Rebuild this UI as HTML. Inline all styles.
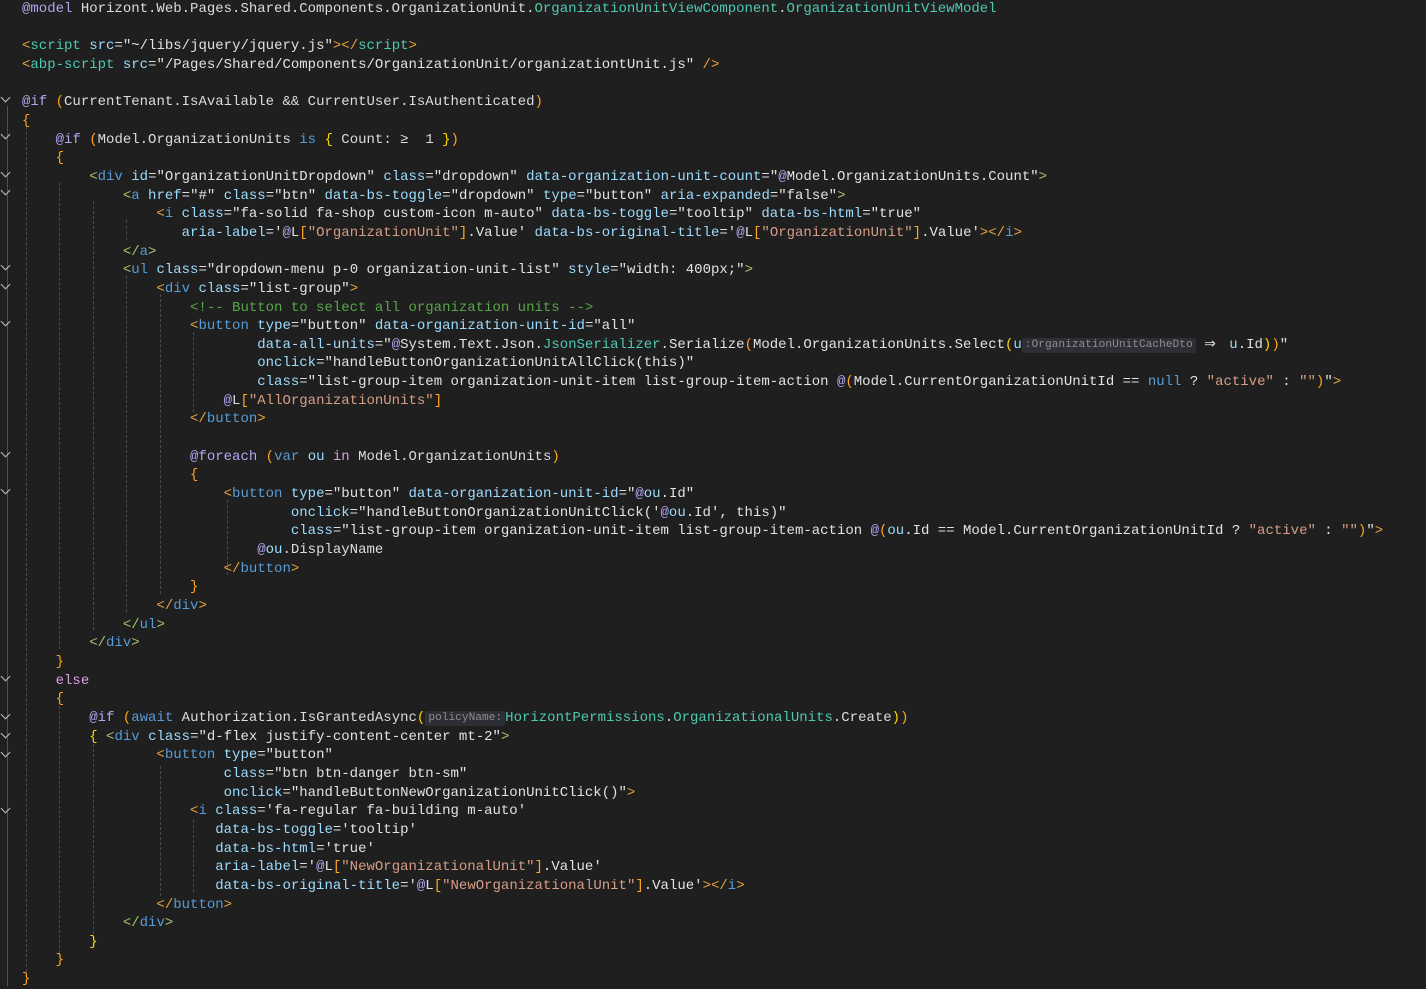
<!DOCTYPE html><html><head><meta charset="utf-8"><style>
body{margin:0;background:#1f1f1f;width:1426px;height:987px;overflow:hidden;position:relative}
pre{position:absolute;left:22px;top:0px;margin:0;font:14px/18.66px "Liberation Mono",monospace;color:#dcdcdc;white-space:pre}
.a{color:#9cdcfe}.v{color:#e2e2e2}.t{color:#569cd6}.d{color:#e8a33d}.g{color:#a6c46a}.r{color:#b4a4f0}.k{color:#569cd6}.s{color:#d69d85}.c{color:#57a64a}.y{color:#4ec9b0}.p{color:#ffa51f}.q{color:#ffd700}.l{color:#9cdcfe}.e{color:#d8a0df}
.h{display:inline-block;font-size:11.2px;line-height:15px;background:#2e2e36;color:#8f8f8f;padding:0 3px;border-radius:2px;vertical-align:1px}
.ge{display:inline-block;width:16.8px}
.gd{position:absolute;border-left:1px dashed #4a4a4a;width:0}
.ch{position:absolute;left:2px;width:6px;height:6px;border-right:1.3px solid #c0c0c0;border-bottom:1.3px solid #c0c0c0;transform:rotate(45deg)}
.gl{position:absolute;left:7px;width:1px;background:#505050}
</style></head><body>
<div class="gl" style="top:106px;height:880px"></div>
<div class="ch" style="top:94px"></div><div class="ch" style="top:131px"></div><div class="ch" style="top:169px"></div><div class="ch" style="top:187px"></div><div class="ch" style="top:262px"></div><div class="ch" style="top:281px"></div><div class="ch" style="top:318px"></div><div class="ch" style="top:449px"></div><div class="ch" style="top:486px"></div><div class="ch" style="top:673px"></div><div class="ch" style="top:711px"></div><div class="ch" style="top:730px"></div><div class="ch" style="top:749px"></div><div class="ch" style="top:805px"></div>
<div class="gd" style="left:26px;top:127px;height:845px"></div>
<div class="gd" style="left:59px;top:183px;height:466px"></div>
<div class="gd" style="left:59px;top:706px;height:247px"></div>
<div class="gd" style="left:93px;top:201px;height:429px"></div>
<div class="gd" style="left:93px;top:744px;height:190px"></div>
<div class="gd" style="left:126px;top:220px;height:20px"></div>
<div class="gd" style="left:126px;top:276px;height:336px"></div>
<div class="gd" style="left:160px;top:294px;height:300px"></div>
<div class="gd" style="left:160px;top:766px;height:130px"></div>
<div class="gd" style="left:193px;top:332px;height:80px"></div>
<div class="gd" style="left:193px;top:820px;height:72px"></div>
<div class="gd" style="left:227px;top:500px;height:75px"></div>
<pre><span class="r">@model</span> Horizont.Web.Pages.Shared.Components.OrganizationUnit.<span class="y">OrganizationUnitViewComponent</span>.<span class="y">OrganizationUnitViewModel</span>

<span class="d">&lt;</span><span class="y">script</span> <span class="a">src</span>=<span class="v">"~/libs/jquery/jquery.js"</span><span class="d">&gt;&lt;/</span><span class="y">script</span><span class="d">&gt;</span>
<span class="d">&lt;</span><span class="y">abp-script</span> <span class="a">src</span>=<span class="v">"/Pages/Shared/Components/OrganizationUnit/organizationtUnit.js"</span> <span class="d">/&gt;</span>

<span class="r">@if</span> <span class="p">(</span>CurrentTenant.IsAvailable &amp;&amp; CurrentUser.IsAuthenticated<span class="p">)</span>
<span class="p">{</span>
    <span class="r">@if</span> <span class="p">(</span>Model.OrganizationUnits <span class="k">is</span> <span class="q">{</span> Count: <span class="ge">≥</span> 1 <span class="q">}</span><span class="p">)</span>
    <span class="p">{</span>
        <span class="g">&lt;</span><span class="t">div</span> <span class="a">id</span>=<span class="v">"OrganizationUnitDropdown"</span> <span class="a">class</span>=<span class="v">"dropdown"</span> <span class="a">data-organization-unit-count</span>=<span class="v">"<span class="r">@</span>Model.OrganizationUnits.Count"</span><span class="g">&gt;</span>
            <span class="g">&lt;</span><span class="t">a</span> <span class="a">href</span>=<span class="v">"#"</span> <span class="a">class</span>=<span class="v">"btn"</span> <span class="a">data-bs-toggle</span>=<span class="v">"dropdown"</span> <span class="a">type</span>=<span class="v">"button"</span> <span class="a">aria-expanded</span>=<span class="v">"false"</span><span class="g">&gt;</span>
                <span class="d">&lt;</span><span class="t">i</span> <span class="a">class</span>=<span class="v">"fa-solid fa-shop custom-icon m-auto"</span> <span class="a">data-bs-toggle</span>=<span class="v">"tooltip"</span> <span class="a">data-bs-html</span>=<span class="v">"true"</span>
                   <span class="a">aria-label</span>=<span class="v">'<span class="r">@</span>L<span class="p">[</span><span class="s">"OrganizationUnit"</span><span class="p">]</span>.Value'</span> <span class="a">data-bs-original-title</span>=<span class="v">'<span class="r">@</span>L<span class="p">[</span><span class="s">"OrganizationUnit"</span><span class="p">]</span>.Value'</span><span class="d">&gt;&lt;/</span><span class="t">i</span><span class="d">&gt;</span>
            <span class="g">&lt;/</span><span class="t">a</span><span class="g">&gt;</span>
            <span class="g">&lt;</span><span class="t">ul</span> <span class="a">class</span>=<span class="v">"dropdown-menu p-0 organization-unit-list"</span> <span class="a">style</span>=<span class="v">"width: 400px;"</span><span class="g">&gt;</span>
                <span class="d">&lt;</span><span class="t">div</span> <span class="a">class</span>=<span class="v">"list-group"</span><span class="d">&gt;</span>
                    <span class="c">&lt;!-- Button to select all organization units --&gt;</span>
                    <span class="d">&lt;</span><span class="t">button</span> <span class="a">type</span>=<span class="v">"button"</span> <span class="a">data-organization-unit-id</span>=<span class="v">"all"</span>
                            <span class="a">data-all-units</span>=<span class="v">"<span class="r">@</span>System.Text.Json.<span class="y">JsonSerializer</span>.Serialize<span class="p">(</span>Model.OrganizationUnits.Select<span class="q">(</span><span class="l">u</span><span class="h">:OrganizationUnitCacheDto</span> <span class="ge">⇒</span> <span class="l">u</span>.Id<span class="q">)</span><span class="p">)</span>"</span>
                            <span class="a">onclick</span>=<span class="v">"handleButtonOrganizationUnitAllClick(this)"</span>
                            <span class="a">class</span>=<span class="v">"list-group-item organization-unit-item list-group-item-action <span class="r">@</span><span class="p">(</span>Model.CurrentOrganizationUnitId == <span class="k">null</span> ? <span class="s">"active"</span> : <span class="s">""</span><span class="p">)</span>"</span><span class="d">&gt;</span>
                        <span class="r">@</span>L<span class="p">[</span><span class="s">"AllOrganizationUnits"</span><span class="p">]</span>
                    <span class="d">&lt;/</span><span class="t">button</span><span class="d">&gt;</span>

                    <span class="r">@foreach</span> <span class="p">(</span><span class="k">var</span> <span class="l">ou</span> <span class="e">in</span> Model.OrganizationUnits<span class="p">)</span>
                    <span class="p">{</span>
                        <span class="d">&lt;</span><span class="t">button</span> <span class="a">type</span>=<span class="v">"button"</span> <span class="a">data-organization-unit-id</span>=<span class="v">"<span class="r">@</span><span class="l">ou</span>.Id"</span>
                                <span class="a">onclick</span>=<span class="v">"handleButtonOrganizationUnitClick('<span class="r">@</span><span class="l">ou</span>.Id', this)"</span>
                                <span class="a">class</span>=<span class="v">"list-group-item organization-unit-item list-group-item-action <span class="r">@</span><span class="p">(</span><span class="l">ou</span>.Id == Model.CurrentOrganizationUnitId ? <span class="s">"active"</span> : <span class="s">""</span><span class="p">)</span>"</span><span class="d">&gt;</span>
                            <span class="r">@</span><span class="l">ou</span>.DisplayName
                        <span class="d">&lt;/</span><span class="t">button</span><span class="d">&gt;</span>
                    <span class="p">}</span>
                <span class="d">&lt;/</span><span class="t">div</span><span class="d">&gt;</span>
            <span class="g">&lt;/</span><span class="t">ul</span><span class="g">&gt;</span>
        <span class="g">&lt;/</span><span class="t">div</span><span class="g">&gt;</span>
    <span class="p">}</span>
    <span class="e">else</span>
    <span class="p">{</span>
        <span class="r">@if</span> <span class="p">(</span><span class="k">await</span> Authorization.IsGrantedAsync<span class="q">(</span><span class="h">policyName:</span><span class="y">HorizontPermissions</span>.<span class="y">OrganizationalUnits</span>.Create<span class="q">)</span><span class="p">)</span>
        <span class="q">{</span> <span class="g">&lt;</span><span class="t">div</span> <span class="a">class</span>=<span class="v">"d-flex justify-content-center mt-2"</span><span class="g">&gt;</span>
                <span class="d">&lt;</span><span class="t">button</span> <span class="a">type</span>=<span class="v">"button"</span>
                        <span class="a">class</span>=<span class="v">"btn btn-danger btn-sm"</span>
                        <span class="a">onclick</span>=<span class="v">"handleButtonNewOrganizationUnitClick()"</span><span class="d">&gt;</span>
                    <span class="d">&lt;</span><span class="t">i</span> <span class="a">class</span>=<span class="v">'fa-regular fa-building m-auto'</span>
                       <span class="a">data-bs-toggle</span>=<span class="v">'tooltip'</span>
                       <span class="a">data-bs-html</span>=<span class="v">'true'</span>
                       <span class="a">aria-label</span>=<span class="v">'<span class="r">@</span>L<span class="p">[</span><span class="s">"NewOrganizationalUnit"</span><span class="p">]</span>.Value'</span>
                       <span class="a">data-bs-original-title</span>=<span class="v">'<span class="r">@</span>L<span class="p">[</span><span class="s">"NewOrganizationalUnit"</span><span class="p">]</span>.Value'</span><span class="d">&gt;&lt;/</span><span class="t">i</span><span class="d">&gt;</span>
                <span class="d">&lt;/</span><span class="t">button</span><span class="d">&gt;</span>
            <span class="g">&lt;/</span><span class="t">div</span><span class="g">&gt;</span>
        <span class="q">}</span>
    <span class="p">}</span>
<span class="p">}</span></pre>
</body></html>
